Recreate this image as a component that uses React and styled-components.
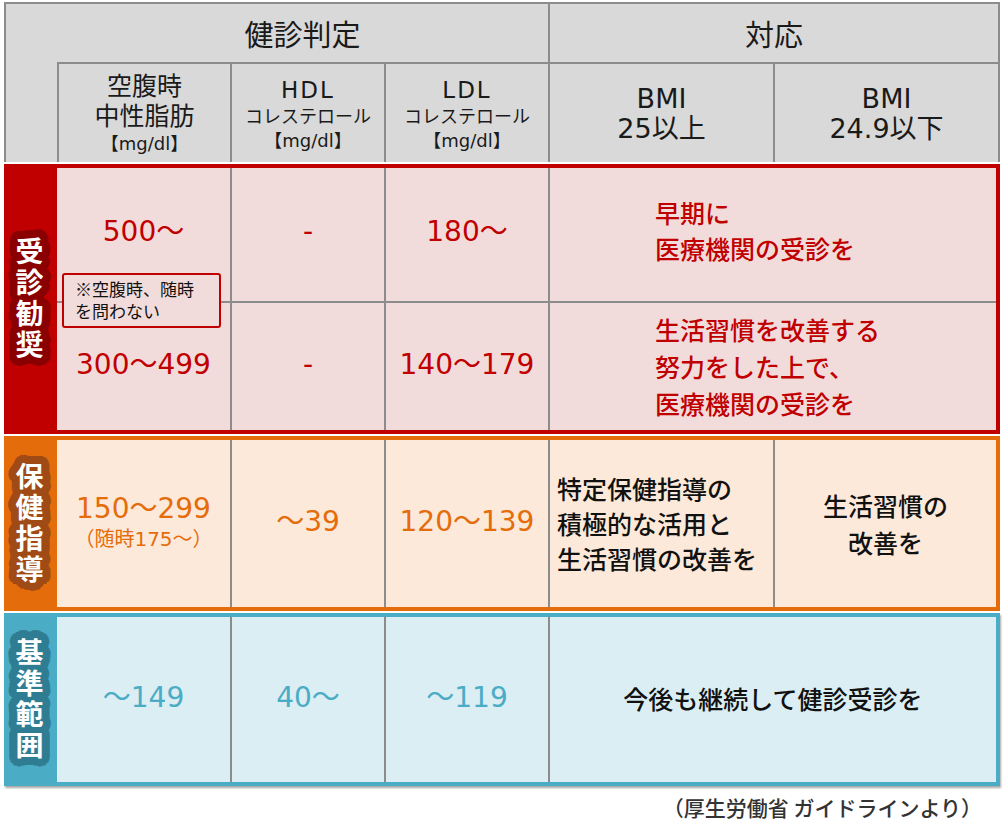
import React from 'react';
import styled, { createGlobalStyle } from "styled-components"

const GlobalStyle = createGlobalStyle`
  body {
    margin: 0;
    background: #ffffff;
    font-family: "Noto Sans CJK JP", "Noto Sans", sans-serif;
  }
  * { box-sizing: border-box; }
`

const LINE = "#8c8c8c"
const LATIN = `"DejaVu Sans", "Noto Sans CJK JP", sans-serif`

const halo = (color) => {
  const list = []
  for (let r of [4, 8]) {
    for (let i = 0; i < 24; i++) {
      const a = (i / 24) * Math.PI * 2
      list.push(`${(Math.cos(a) * r).toFixed(1)}px ${(Math.sin(a) * r).toFixed(1)}px 0 ${color}`)
    }
  }
  return list.join(", ")
}

const themes = {
  red: { border: "#c00000", bg: "#f2dcdb", text: "#c00000", halo: "#8a0000" },
  orange: { border: "#e46c0a", bg: "#fde9d9", text: "#e46c0a", halo: "#a04a16" },
  blue: { border: "#4bacc6", bg: "#daeef3", text: "#4bacc6", halo: "#2f7d93" },
}

const Page = styled.div`
  width: 1004px;
  padding: 2px 0 0 4px;
`

const Table = styled.div`
  width: 996px;
  display: flex;
  flex-direction: column;
  gap: 2px;
`

const Header = styled.div`
  display: grid;
  grid-template-columns: 51px 173px 154px 164px 225px 225px;
  grid-template-rows: 58px 100px;
  border: 2px solid ${LINE};
  border-bottom: none;
  background: #d9d9d9;
  color: #1a1a1a;
`

const Corner = styled.div`
  grid-row: 1 / 3;
`

const GroupHead = styled.div`
  grid-column: ${(p) => p.$span};
  display: flex;
  align-items: center;
  justify-content: center;
  font-size: 29px;
  border-left: ${(p) => (p.$line ? `2px solid ${LINE}` : "none")};
`

const ColHead = styled.div`
  border-left: 2px solid ${LINE};
  border-top: 2px solid ${LINE};
  display: flex;
  flex-direction: column;
  align-items: center;
  justify-content: center;
  text-align: center;
  padding-top: 2px;
`

const Big = styled.div`
  font-family: ${LATIN};
  font-size: ${(p) => p.$size || "25px"};
  letter-spacing: ${(p) => p.$spacing || "0px"};
  line-height: 30px;
`

const Small = styled.div`
  font-family: ${LATIN};
  font-size: 18px;
  line-height: 24px;
`

const Section = styled.div`
  position: relative;
  display: grid;
  grid-template-columns: 49px 173px 154px 164px 225px 223px;
  grid-template-rows: ${(p) => p.$rows};
  border: 4px solid ${(p) => themes[p.$tone].border};
  background: ${(p) => themes[p.$tone].bg};
  color: ${(p) => themes[p.$tone].text};
  box-shadow: ${(p) => (p.$shadow ? "1px 2px 2px rgba(0,0,0,0.35)" : "none")};
`

const Label = styled.div`
  grid-row: 1 / -1;
  background: ${(p) => themes[p.$tone].border};
  display: flex;
  align-items: center;
  justify-content: center;
  padding-right: 6px;
`

const LabelText = styled.span`
  writing-mode: vertical-rl;
  text-orientation: upright;
  color: #ffffff;
  font-size: 28px;
  font-weight: 700;
  letter-spacing: 3px;
  line-height: 1;
  text-shadow: ${(p) => halo(themes[p.$tone].halo)};
`

const Cell = styled.div`
  grid-column: ${(p) => p.$span || "auto"};
  border-left: ${(p) => (p.$first ? "none" : `2px solid ${LINE}`)};
  border-top: ${(p) => (p.$top ? `2px solid ${LINE}` : "none")};
  display: flex;
  flex-direction: column;
  align-items: ${(p) => (p.$left ? "flex-start" : "center")};
  justify-content: center;
  padding-left: ${(p) => p.$pad || "0px"};
  padding-bottom: ${(p) => p.$lift || "0px"};
  text-align: ${(p) => (p.$left ? "left" : "center")};
`

const Value = styled.div`
  font-family: ${LATIN};
  font-size: 28px;
  line-height: 34px;
`

const SubValue = styled.div`
  font-family: ${LATIN};
  font-size: 20px;
  line-height: 26px;
`

const Advice = styled.div`
  font-size: 25px;
  font-weight: 500;
  line-height: ${(p) => p.$lh || "36px"};
  color: ${(p) => (p.$dark ? "#111111" : "inherit")};
`

const Note = styled.div`
  position: absolute;
  left: 54px;
  top: 105px;
  width: 159px;
  height: 55px;
  border: 2px solid #c00000;
  border-radius: 3px;
  background: #f2dcdb;
  color: #111111;
  font-size: 17px;
  line-height: 22px;
  padding: 3px 0 0 11px;
`

const Caption = styled.div`
  width: 996px;
  text-align: right;
  padding-right: 18px;
  margin-top: 6px;
  font-size: 21px;
  font-weight: 500;
  color: #333333;
`

const App = () => {
  return (
    <Page>
      <GlobalStyle />
      <Table>
        <Header>
          <Corner />
          <GroupHead $span="2 / 5">健診判定</GroupHead>
          <GroupHead $span="5 / 7" $line>対応</GroupHead>
          <ColHead>
            <Big>空腹時</Big>
            <Big>中性脂肪</Big>
            <Small>【mg/dl】</Small>
          </ColHead>
          <ColHead>
            <Big $size="23px" $spacing="2px">HDL</Big>
            <Small>コレステロール</Small>
            <Small>【mg/dl】</Small>
          </ColHead>
          <ColHead>
            <Big $size="23px" $spacing="2px">LDL</Big>
            <Small>コレステロール</Small>
            <Small>【mg/dl】</Small>
          </ColHead>
          <ColHead>
            <Big $size="27px">BMI</Big>
            <Big $size="27px">25以上</Big>
          </ColHead>
          <ColHead>
            <Big $size="27px">BMI</Big>
            <Big $size="27px">24.9以下</Big>
          </ColHead>
        </Header>

        <Section $tone="red" $rows="133px 129px">
          <Label $tone="red"><LabelText $tone="red">受診勧奨</LabelText></Label>
          <Cell $first $lift="6px"><Value>500～</Value></Cell>
          <Cell $lift="6px"><Value>-</Value></Cell>
          <Cell $lift="6px"><Value>180～</Value></Cell>
          <Cell $span="5 / 7" $left $pad="105px" $lift="10px">
            <Advice>早期に<br />医療機関の受診を</Advice>
          </Cell>
          <Cell $first $top $lift="4px"><Value>300～499</Value></Cell>
          <Cell $top $lift="4px"><Value>-</Value></Cell>
          <Cell $top $lift="4px"><Value>140～179</Value></Cell>
          <Cell $span="5 / 7" $left $pad="105px" $top>
            <Advice $lh="37px">生活習慣を改善する<br />努力をした上で、<br />医療機関の受診を</Advice>
          </Cell>
          <Note>※空腹時、随時<br />を問わない</Note>
        </Section>

        <Section $tone="orange" $rows="167px">
          <Label $tone="orange"><LabelText $tone="orange">保健指導</LabelText></Label>
          <Cell $first $lift="4px">
            <Value>150～299</Value>
            <SubValue>（随時175～）</SubValue>
          </Cell>
          <Cell $lift="4px"><Value>～39</Value></Cell>
          <Cell $lift="4px"><Value>120～139</Value></Cell>
          <Cell $left $pad="7px">
            <Advice $dark $lh="35px">特定保健指導の<br />積極的な活用と<br />生活習慣の改善を</Advice>
          </Cell>
          <Cell>
            <Advice $dark $lh="37px">生活習慣の<br />改善を</Advice>
          </Cell>
        </Section>

        <Section $tone="blue" $rows="165px" $shadow>
          <Label $tone="blue"><LabelText $tone="blue">基準範囲</LabelText></Label>
          <Cell $first $lift="4px"><Value>～149</Value></Cell>
          <Cell $lift="4px"><Value>40～</Value></Cell>
          <Cell $lift="4px"><Value>～119</Value></Cell>
          <Cell $span="5 / 7" $lift="4px">
            <Advice $dark>今後も継続して健診受診を</Advice>
          </Cell>
        </Section>
      </Table>
      <Caption>（厚生労働省 ガイドラインより）</Caption>
    </Page>
  )
}

export default App
